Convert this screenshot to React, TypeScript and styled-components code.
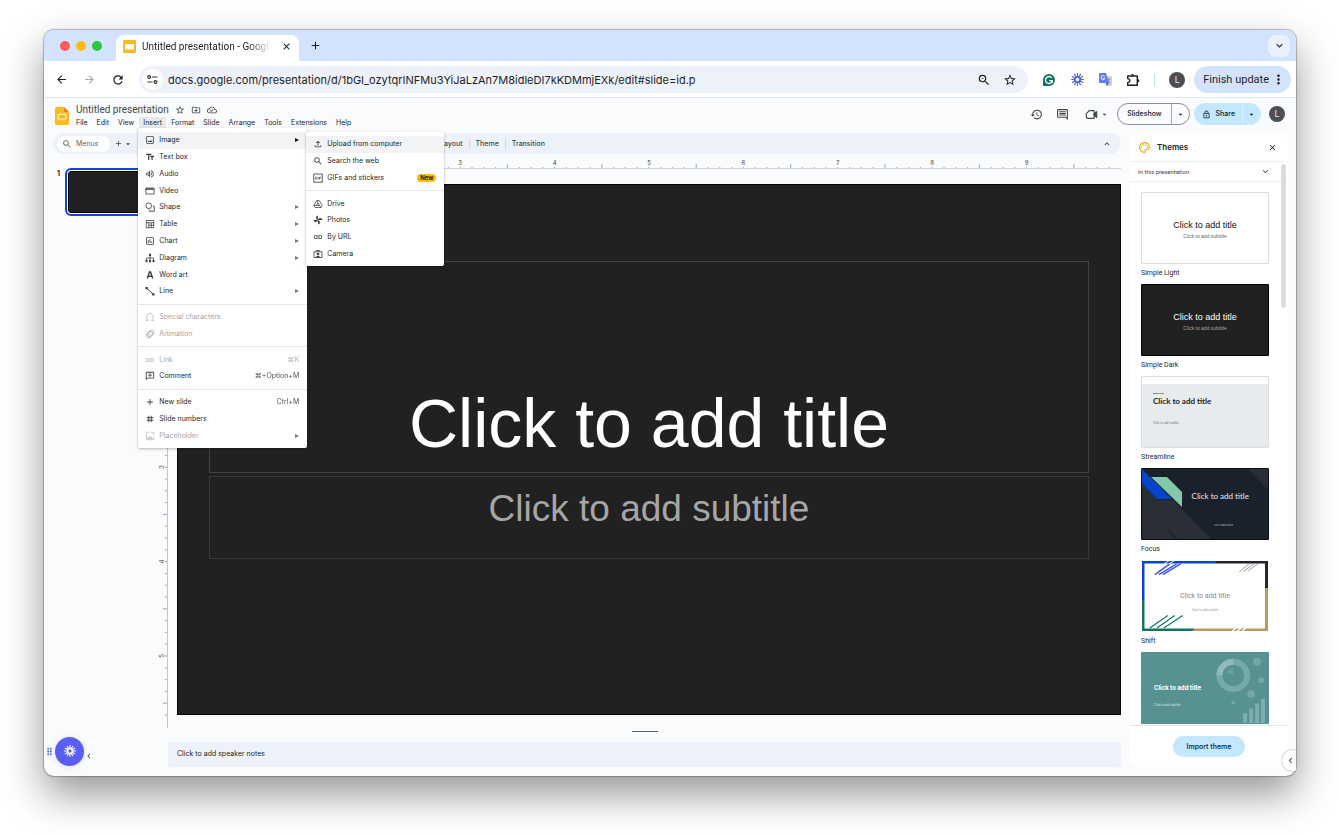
import React from 'react';
import styled, { createGlobalStyle } from 'styled-components';
import {
  MdStarBorder, MdOutlineDriveFileMove, MdOutlineCloudDone, MdOutlineImage, MdTextFields,
  MdOutlineVolumeUp, MdOutlineInsertChart, MdAnimation,
  MdLink, MdOutlineAddComment, MdAdd, MdTag, MdOutlineFileUpload, MdSearch,
  MdHistory, MdOutlineComment, MdOutlineLock, MdOutlinePalette, MdZoomOut,
  MdClose, MdExpandMore, MdExpandLess, MdChevronLeft, MdMoreVert,
  MdArrowBack, MdArrowForward, MdRefresh, MdArrowDropDown, MdUndo, MdRedo, MdOutlinePrint,
  MdOutlineFormatPaint, MdDragIndicator,
} from 'react-icons/md';
import { Omega } from 'lucide-react';

const GlobalStyle = createGlobalStyle`
  * { box-sizing: border-box; }
  body { margin: 0; background: #fff; font-family: Inter, "Liberation Sans", sans-serif; color: #1f1f1f; }
  button, input { font: inherit; color: inherit; border: 0; padding: 0; margin: 0; background: none; }
  a { color: inherit; text-decoration: none; }
  ul { list-style: none; margin: 0; padding: 0; }
  svg { display: block; flex: none; }
  h1, h2, p { margin: 0; font-weight: 400; }
`;

/* ---------- window ---------- */

const Page = styled.div`
  min-height: 100vh;
  display: flex;
  padding: 30px 44px 59px;
`;

const Window = styled.div`
  position: relative;
  flex: 1;
  min-width: 0;
  display: flex;
  flex-direction: column;
  border-radius: 10px;
  background: #f9fbfd;
  box-shadow: 0 0 1px 1px rgba(0, 0, 0, 0.25), 0 18px 40px rgba(0, 0, 0, 0.42);
`;

const TabStrip = styled.div`
  height: 31px;
  display: flex;
  align-items: center;
  padding: 0 6px 0 16px;
  background: #d3e3fd;
  border-radius: 10px 10px 0 0;
`;

const Lights = styled.div`
  display: flex;
  gap: 6px;
  margin-right: 14px;
`;

const Light = styled.span<{ $color: string }>`
  width: 10px;
  height: 10px;
  border-radius: 50%;
  background: ${(p) => p.$color};
`;

const Tab = styled.div`
  align-self: flex-end;
  width: 183px;
  height: 26px;
  padding: 0 7px 3px;
  display: flex;
  align-items: center;
  background: #fff;
  border-radius: 8px 8px 0 0;
`;

const TabTitle = styled.span`
  flex: 1;
  margin: 0 10px 0 6px;
  white-space: nowrap;
  font: 10px/14px Roboto, sans-serif;
  mask-image: linear-gradient(to right, #000 82%, transparent);
`;

const IconButton = styled.button<{ $color?: string }>`
  display: flex;
  align-items: center;
  justify-content: center;
  color: ${(p) => p.$color ?? 'inherit'};
`;

const NewTab = styled(IconButton)`
  margin-left: 10px;
`;

const TabSearch = styled(IconButton)`
  width: 22px;
  height: 22px;
  margin-left: auto;
  border-radius: 8px;
  background: #e9f1fe;
`;

const AddressBar = styled.div`
  height: 37px;
  display: flex;
  align-items: center;
  padding: 1px 5px 0 11px;
  background: #fff;
  border-bottom: 1px solid #dfe5ec;
`;

const NavButtons = styled.div`
  display: flex;
  gap: 15px;
  margin-right: 14px;
`;

const Omnibox = styled.div`
  flex: 1;
  min-width: 0;
  height: 27px;
  display: flex;
  align-items: center;
  gap: 12px;
  padding: 0 11px 0 3px;
  border-radius: 14px;
  background: #edf1fa;
`;

const SiteInfo = styled(IconButton)`
  width: 21px;
  height: 21px;
  border-radius: 50%;
  background: #fff;
`;

const UrlInput = styled.input`
  flex: 1;
  min-width: 0;
  margin-left: -7px;
  font: 11px/16px Inter, sans-serif;
  color: #1f1f1f;
  outline: 0;
`;

const Extensions = styled.div`
  display: flex;
  align-items: center;
  gap: 14px;
  margin-left: 14px;
`;

const ExtensionButton = styled(IconButton)`
  width: 14px;
  height: 14px;
`;

const BarDivider = styled.span`
  width: 1px;
  height: 12px;
  background: #c8dbfb;
`;

const Avatar = styled.button`
  width: 16px;
  height: 16px;
  border-radius: 50%;
  background: #4c5054;
  color: #e8eaed;
  font: 9px/16px Roboto, sans-serif;
`;

const FinishUpdate = styled.button`
  height: 27px;
  display: flex;
  align-items: center;
  gap: 2px;
  margin-left: 9px;
  padding: 0 5px 0 9px;
  border-radius: 14px;
  background: #d3e3fd;
  font: 11px/16px Roboto, sans-serif;
  white-space: nowrap;
`;

/* ---------- document header ---------- */

const DocHeader = styled.header`
  height: 35px;
  display: flex;
  align-items: flex-start;
  padding: 4px 11px 0;
`;

const HomeLink = styled.a`
  margin: 5px 3px 0 0;
`;

const TitleArea = styled.div`
  display: flex;
  flex-direction: column;
`;

const TitleRow = styled.div`
  display: flex;
  align-items: center;
  gap: 6px;
  height: 15px;
  padding-left: 4px;
  color: #444746;
`;

const DocTitle = styled.h1`
  font: 10px/14px Roboto, sans-serif;
`;

const MenuBar = styled.nav`
  display: flex;
  gap: 1px;
`;

const MenuSlot = styled.div`
  position: relative;
  display: flex;
`;

const MenuBarButton = styled.button<{ $active?: boolean }>`
  height: 11px;
  padding: 0 4px;
  border-radius: 2px 2px 0 0;
  background: ${(p) => (p.$active ? '#e6e8ea' : 'transparent')};
  font: 7px/11px Inter, sans-serif;
`;

const HeaderActions = styled.div`
  display: flex;
  align-items: center;
  margin: 1px 0 0 auto;
  color: #444746;
`;

const IconRow = styled.div`
  display: flex;
  align-items: center;
  gap: 13px;
  margin-right: 8px;
`;

const MeetButton = styled(IconButton)`
  gap: 2px;
  padding-left: 3px;
`;

const SplitPill = styled.div<{ $filled?: boolean }>`
  display: flex;
  height: 22px;
  margin-right: ${(p) => (p.$filled ? '8px' : '4px')};
  border-radius: 11px;
  border: 1px solid ${(p) => (p.$filled ? '#c2e7ff' : '#8b8f92')};
  background: ${(p) => (p.$filled ? '#c2e7ff' : 'transparent')};
  color: #001d35;
  font: 500 7px/20px Inter, sans-serif;
`;

const PillMain = styled.button<{ $wide?: boolean }>`
  display: flex;
  align-items: center;
  gap: 5px;
  padding: 0 ${(p) => (p.$wide ? '9px' : '7px')};
`;

const PillArrow = styled.button<{ $filled?: boolean }>`
  width: 18px;
  display: flex;
  align-items: center;
  justify-content: center;
  border-left: 1px solid ${(p) => (p.$filled ? '#d9f0ff' : '#a7aaad')};
`;

/* ---------- menus ---------- */

const MenuPanel = styled.ul<{ $sub?: boolean }>`
  position: absolute;
  z-index: ${(p) => (p.$sub ? 2 : 10)};
  top: ${(p) => (p.$sub ? '0' : '100%')};
  left: ${(p) => (p.$sub ? 'calc(100% - 1px)' : '-1px')};
  width: ${(p) => (p.$sub ? '138px' : '169px')};
  height: ${(p) => (p.$sub ? '134px' : '320px')};
  padding: 4px 0;
  display: flex;
  flex-direction: column;
  background: #fff;
  border-radius: 2px;
  box-shadow: 0 1px 3px rgba(0, 0, 0, 0.28);
`;

const MenuEntry = styled.li<{ $open?: boolean }>`
  position: relative;
  flex: 1;
  display: flex;
  background: ${(p) => (p.$open ? '#f1f3f4' : 'transparent')};
`;

const MenuButton = styled.button<{ $disabled?: boolean }>`
  flex: 1;
  display: flex;
  align-items: center;
  gap: 4px;
  padding: 0 8px 0 7px;
  text-align: left;
  font: 7px/12px Inter, sans-serif;
  color: ${(p) => (p.$disabled ? '#a3a5a8' : '#1f1f1f')};

  & > svg { color: ${(p) => (p.$disabled ? '#b4b6b9' : '#3c3f42')}; }
`;

const MenuLabel = styled.span`
  flex: 1;
  white-space: nowrap;
`;

const Shortcut = styled.span`
  font: 7px/12px Inter, "DejaVu Sans", sans-serif;
  color: inherit;
  opacity: 0.8;
`;

const MenuRule = styled.li`
  height: 1px;
  margin: 4px 0;
  background: #e4e6e9;
`;

const NewBadge = styled.span`
  padding: 0 3px;
  border-radius: 4px;
  background: #fbbc04;
  font: 700 6px/8px Inter, sans-serif;
`;

/* ---------- workspace ---------- */

const Workspace = styled.div`
  flex: 1;
  min-height: 0;
  display: flex;
  gap: 9px;
  padding: 0 8px 9px 0;
`;

const EditorColumn = styled.main`
  flex: 1;
  min-width: 0;
  display: flex;
  flex-direction: column;
`;

const Toolbar = styled.div`
  height: 21px;
  display: flex;
  align-items: center;
  margin-left: 9px;
  padding: 0 9px 0 4px;
  border-radius: 11px;
  background: #edf2fa;
  color: #444746;
  font: 500 7px/12px Inter, sans-serif;
`;

const MenusSearch = styled.button`
  height: 16px;
  width: 53px;
  display: flex;
  align-items: center;
  gap: 4px;
  padding-left: 5px;
  margin-right: 4px;
  border-radius: 8px;
  background: #fff;
  font: 7px/16px Inter, sans-serif;
  color: #5f6368;
`;

const ToolGroup = styled.div`
  flex: 0 0 301px;
  display: flex;
  align-items: center;
  gap: 12px;
  padding-left: 12px;
`;

const ToolButton = styled.button`
  padding: 0 6px;
`;

const ToolDivider = styled.span`
  width: 1px;
  height: 10px;
  background: #d3d7de;
`;

const CollapseButton = styled(IconButton)`
  margin-left: auto;
`;

const EditorBody = styled.div`
  flex: 1;
  min-height: 0;
  display: flex;
`;

const Filmstrip = styled.aside`
  width: 112px;
  flex: none;
  display: flex;
  flex-direction: column;
  padding: 14px 0 0 13px;
`;

const SlideEntry = styled.div`
  display: flex;
  align-items: flex-start;
  gap: 5px;
  font: 700 7px/12px Inter, sans-serif;
`;

const SlideThumb = styled.button`
  width: 85px;
  height: 48px;
  padding: 1px;
  border: 2px solid #1347d6;
  border-radius: 6px;
  background: #fff;
`;

const SlidePreview = styled.span`
  display: block;
  height: 100%;
  border: 1px solid #050505;
  border-radius: 3px;
  background: #212121;
`;

const AssistantRow = styled.div`
  display: flex;
  align-items: center;
  margin: auto 0 1px -13px;
  height: 30px;
  color: #3d5bf0;
`;

const AssistantButton = styled.button`
  width: 29px;
  height: 29px;
  display: flex;
  align-items: center;
  justify-content: center;
  border-radius: 50%;
  background: #5b5ef6;
  color: #fff;
  box-shadow: 0 1px 6px rgba(0, 0, 0, 0.12);
`;

const FilmstripToggle = styled(IconButton)`
  padding-top: 10px;
`;

const CanvasColumn = styled.section`
  flex: 1;
  min-width: 0;
  display: flex;
  flex-direction: column;
`;

const CanvasGrid = styled.div`
  display: grid;
  grid-template-columns: 12px 1fr;
  grid-template-rows: 15px auto;
`;

const RulerTop = styled.div`
  grid-column: 2;
  padding-left: 9px;
  border-bottom: 1px solid #d0d3d6;
`;

const RulerSide = styled.div`
  grid-column: 1;
  padding: 15px 0 13px;
  border-right: 1px solid #c4c7ca;
`;

const RulerSvg = styled.svg`
  width: 100%;
  height: 100%;
  overflow: visible;
  font: 6px Inter, sans-serif;
  fill: #444746;
  stroke: none;
`;

const SlideArea = styled.div`
  padding: 15px 0 13px 9px;
`;

const Slide = styled.div`
  aspect-ratio: 944 / 531;
  display: flex;
  flex-direction: column;
  gap: 3px;
  padding: 76px 31px 0;
  border: 1px solid #050505;
  background: #212121;
  font-family: "Liberation Sans", Arial, sans-serif;
  text-align: center;
`;

const TitlePlaceholder = styled.div`
  height: 212px;
  display: flex;
  align-items: flex-end;
  justify-content: center;
  padding-bottom: 10px;
  border: 1px solid #424242;
  color: #fff;
  font-size: 68px;
  line-height: 78px;
`;

const SubtitlePlaceholder = styled.div`
  height: 83px;
  padding-top: 11px;
  border: 1px solid #383838;
  color: #a6a6a6;
  font-size: 37px;
  line-height: 42px;
`;

const Splitter = styled.div`
  height: 14px;
  display: flex;
  justify-content: center;
  padding: 3px 0 0 12px;
`;

const SplitterHandle = styled.span`
  width: 26px;
  height: 1px;
  background: #5f6368;
`;

const Notes = styled.textarea`
  display: block;
  height: 25px;
  margin: 0 0 0 12px;
  padding: 6px 9px;
  border: 0;
  border-radius: 4px;
  outline: 0;
  resize: none;
  background: #edf2fa;
  font: 7px/12px Inter, sans-serif;
  color: #1f1f1f;
`;

/* ---------- themes ---------- */

const ThemesPanel = styled.aside`
  width: 158px;
  flex: none;
  display: flex;
  flex-direction: column;
  min-height: 0;
  border-radius: 8px;
  background: #fff;
`;

const ThemesHeader = styled.div`
  height: 29px;
  flex: none;
  display: flex;
  align-items: center;
  gap: 6px;
  padding: 0 11px 0 8px;
  border-bottom: 1px solid #eceef0;
`;

const ThemesHeading = styled.h2`
  flex: 1;
  font: 600 8px/12px Inter, sans-serif;
`;

const ThemesBody = styled.div`
  flex: 1;
  min-height: 0;
  display: flex;
  overflow: hidden;
`;

const ThemesScroll = styled.div`
  flex: 1;
  min-width: 0;
`;

const SectionToggle = styled.button`
  width: 100%;
  height: 20px;
  display: flex;
  align-items: center;
  justify-content: space-between;
  padding: 0 10px 0 8px;
  border-bottom: 1px solid #eceef0;
  font: 6px/12px Roboto, sans-serif;
  color: #444746;
`;

const ThemeList = styled.ul`
  height: 0;
  padding: 10px 12px 0 11px;
  display: flex;
  flex-direction: column;
  gap: 5px;
`;

const ThemeItem = styled.li`
  flex: none;
`;

const ThemeCaption = styled.p`
  padding-top: 3px;
  font: 7px/12px Roboto, sans-serif;
`;

const ThemeThumb = styled.button<{ $bg: string; $outline?: string }>`
  position: relative;
  width: 100%;
  height: 72px;
  display: flex;
  flex-direction: column;
  overflow: hidden;
  border: 1px solid ${(p) => p.$outline ?? 'transparent'};
  border-radius: 1px;
  background: ${(p) => p.$bg};
`;

const ThumbArt = styled.svg`
  position: absolute;
  inset: 0;
  width: 100%;
  height: 100%;
`;

const ThumbText = styled.span<{ $align: string; $color: string; $top: number; $font: string; $inset?: number }>`
  position: relative;
  align-self: ${(p) => p.$align};
  margin-top: ${(p) => p.$top}px;
  margin-inline: ${(p) => p.$inset ?? 0}px;
  color: ${(p) => p.$color};
  font: ${(p) => p.$font};
  white-space: nowrap;
`;

const ScrollTrack = styled.div`
  width: 7px;
  padding-top: 2px;
`;

const ScrollThumb = styled.div`
  width: 5px;
  height: 144px;
  border-radius: 3px;
  background: #dadce0;
`;

const ThemesFooter = styled.div`
  height: 42px;
  flex: none;
  display: flex;
  align-items: center;
  justify-content: center;
  border-top: 1px solid #e4e7ea;
`;

const ImportButton = styled.button`
  height: 21px;
  padding: 0 14px;
  border-radius: 11px;
  background: #c2e7ff;
  color: #001d35;
  font: 500 7px/21px Inter, sans-serif;
`;

const SideToggleClip = styled.div`
  position: absolute;
  right: 0;
  bottom: 4px;
  width: 15px;
  height: 23px;
  overflow: hidden;
`;

const SideToggle = styled.button`
  width: 21px;
  height: 21px;
  margin: 1px;
  padding-left: 3px;
  border-radius: 50%;
  background: #fff;
  color: #444746;
  box-shadow: 0 0 2px rgba(0, 0, 0, 0.45);
`;

/* ---------- drawn icons ---------- */

const SlidesFavicon = () => (
  <svg width="13" height="13" viewBox="0 0 13 13">
    <rect width="13" height="13" rx="1" fill="#fbb91b" />
    <rect x="2" y="4" width="9" height="5.500" fill="#fff" />
  </svg>
);

const SlidesLogo = () => (
  <svg width="14" height="18" viewBox="0 0 14 18">
    <path d="M1.500 0H9l5 5v11.500a1.500 1.500 0 0 1-1.500 1.500h-11A1.500 1.500 0 0 1 0 16.500v-15A1.500 1.500 0 0 1 1.500 0z" fill="#fbb91b" />
    <path d="M9 0l5 5H10a1 1 0 0 1-1-1z" fill="#f0801f" />
    <path d="M3 7.500h8v4.500H3z" fill="none" stroke="#fff" strokeWidth="0.900" />
    <path d="M5 6v1M7 6v1M9 6v1M5 12.500v1M7 12.500v1M9 12.500v1" stroke="#ffe9b8" strokeWidth="0.700" />
  </svg>
);

const SiteSettings = () => (
  <svg width="11" height="11" viewBox="0 0 11 11" fill="none" stroke="#333" strokeWidth="1.200">
    <circle cx="2.200" cy="3" r="1.400" />
    <path d="M5 3h5.500M0.500 8h5" />
    <circle cx="8.500" cy="8" r="1.400" />
  </svg>
);

const Sunburst = ({ size, color }: { size: number; color: string }) => (
  <svg width={size} height={size} viewBox="0 0 14 14" fill="none" stroke={color}>
    <circle cx="7" cy="7" r="2.900" strokeWidth="1.900" />
    {Array.from({ length: 12 }, (_, i) => (
      <path key={i} d="M7 0.600v3" strokeWidth="1.300" strokeLinecap="round" transform={`rotate(${i * 30} 7 7)`} />
    ))}
  </svg>
);

const Grammarly = () => (
  <svg width="12" height="12" viewBox="0 0 12 12">
    <path d="M6 0a6 6 0 1 1 0 12H1a1 1 0 0 1-1-1V6a6 6 0 0 1 6-6z" fill="#11705f" />
    <path d="M8.700 3.800A3.500 3.500 0 1 0 9.400 6.700M6.300 6.700h3.100v2" fill="none" stroke="#fff" strokeWidth="1.300" />
  </svg>
);

const Translate = () => (
  <svg width="13" height="13" viewBox="0 0 13 13">
    <path d="M5 3h7a1 1 0 0 1 1 1v8a1 1 0 0 1-1 1H8z" fill="#cfd3d8" />
    <path d="M9 5v1M7.500 6.200h4M10.800 6.200c-.4 1.600-1.500 2.800-2.800 3.500M8.500 7c.6 1.300 1.500 2.200 2.700 2.800" fill="none" stroke="#7c8288" strokeWidth="0.700" />
    <path d="M1 0h6l3 10H1a1 1 0 0 1-1-1V1a1 1 0 0 1 1-1z" fill="#5f7df5" />
    <path d="M10 10l-2.500 3L7 10z" fill="#3457d5" />
    <path d="M5.700 3.500A2 2 0 1 0 6 5.200H4.200" fill="none" stroke="#fff" strokeWidth="0.900" />
  </svg>
);

const Puzzle = () => (
  <svg width="14" height="14" viewBox="0 0 14 14">
    <path d="M1.700 3h9.600v9.300H1.700V9.700a2.050 2.050 0 0 0 0-4.100z" fill="none" stroke="#1f1f1f" strokeWidth="1.400" strokeLinejoin="round" />
    <path d="M4.800 2.600a1.700 1.700 0 0 1 3.400 0zM11.700 5.900a1.700 1.700 0 0 1 0 3.400z" fill="#1f1f1f" />
  </svg>
);

const MeetCamera = () => (
  <svg width="13" height="13" viewBox="0 0 20 20" fill="none" stroke="currentColor" strokeWidth="1.700" strokeLinejoin="round">
    <path d="M6.500 4H14v12H4a2 2 0 0 1-2-2V8.500z" />
    <path d="M14 8.500l4-3v9l-4-3z" fill="currentColor" />
  </svg>
);

const VideoIcon = () => (
  <svg width="10" height="10" viewBox="0 0 20 20" fill="none" stroke="currentColor">
    <path d="M1.800 4h16.400v12H1.800z" strokeWidth="1.600" />
    <path d="M1.500 6h17" strokeWidth="3.600" />
    <path d="M6 4l1 3M11 4l1 3M16 4l1 3" stroke="#fff" strokeWidth="1" />
  </svg>
);

const TableIcon = () => (
  <svg width="10" height="10" viewBox="0 0 20 20" fill="none" stroke="currentColor" strokeWidth="1.600">
    <path d="M2.500 3h15v14.500h-15zM2.500 7.500h15M7.500 7.500v10M12.500 7.500v10M7.500 12.500h10" />
  </svg>
);

const GifIcon = () => (
  <svg width="10" height="10" viewBox="0 0 20 20" fill="none" stroke="currentColor" strokeWidth="1.700">
    <path d="M1.500 2h17v16.500h-17z" />
    <path d="M8 8.500H5v3.500h3v-2M10.500 7.500v5.500M13 13V8.300h3M13 10.500h2.500" strokeWidth="1.300" />
  </svg>
);

const ShapeIcon = () => (
  <svg width="10" height="10" viewBox="0 0 20 20" fill="none" stroke="currentColor" strokeWidth="1.700">
    <circle cx="7.500" cy="7.500" r="5.700" />
    <path d="M15.500 8.500h3v10h-10v-3" />
  </svg>
);

const DiagramIcon = () => (
  <svg width="10" height="10" viewBox="0 0 20 20">
    <path d="M10 4v13M3 16v-6h14v6" fill="none" stroke="currentColor" strokeWidth="1.600" />
    <path d="M8 1.500h4v4.500H8zM1 14h4v4.500H1zM8 14h4v4.500H8zM15 14h4v4.500h-4z" fill="currentColor" />
  </svg>
);

const WordArtIcon = () => (
  <svg width="10" height="10" viewBox="0 0 20 20" fill="none" stroke="currentColor" strokeWidth="2.800">
    <path d="M4.500 17L9 4h2l4.500 13M6.500 12.500h7" />
  </svg>
);

const LineIcon = () => (
  <svg width="10" height="10" viewBox="0 0 20 20">
    <path d="M3 4l14 13" stroke="currentColor" strokeWidth="2" />
    <path d="M1 2h4.500v4.500H1zM14.500 14.500H19V19h-4.500z" fill="currentColor" />
  </svg>
);

const PlaceholderIcon = () => (
  <svg width="10" height="10" viewBox="0 0 20 20" fill="none" stroke="currentColor" strokeWidth="1.500">
    <path d="M8 2.500H3.500a1 1 0 0 0-1 1v13a1 1 0 0 0 1 1h13a1 1 0 0 0 1-1V12M11 2.500h6.500V9M5 15l3-4 2.500 3 2-2.500L15 15z" />
  </svg>
);

const DriveIcon = () => (
  <svg width="10" height="10" viewBox="0 0 20 20" fill="none" stroke="currentColor" strokeWidth="1.500" strokeLinejoin="round">
    <path d="M7.500 3h5l5.700 9.500-2.300 4.500H4.100l-2.300-4.500z" />
    <path d="M10 8l3 5H7zM7.500 3L10 8M1.800 12.500L7 13M15.900 17L13 13" />
  </svg>
);

const PhotosIcon = () => (
  <svg width="10" height="10" viewBox="0 0 20 20" fill="currentColor">
    <path d="M9.800 1a4.700 4.700 0 0 0 0 9.200zM19 9.800a4.700 4.700 0 0 0-9.200 0zM10.200 19a4.700 4.700 0 0 0 0-9.200zM1 10.200a4.700 4.700 0 0 0 9.200 0z" />
  </svg>
);

const CameraIcon = () => (
  <svg width="10" height="10" viewBox="0 0 20 20">
    <path d="M2 5.500h16v11.500H2zM7 5V3h6v2" fill="none" stroke="currentColor" strokeWidth="1.700" />
    <circle cx="10" cy="10" r="2.700" fill="currentColor" />
    <path d="M6 16.500a4 3 0 0 1 8 0z" fill="currentColor" />
  </svg>
);

const FlippedComment = styled(MdOutlineAddComment)`
  transform: scaleX(-1);
`;

const Triangle = ({ dark }: { dark?: boolean }) => (
  <svg width="4" height="4" viewBox="0 0 4 4">
    <path d="M0 0l4 2-4 2z" fill={dark ? '#111' : '#777'} />
  </svg>
);

/* ---------- data ---------- */

type Entry = {
  label: string;
  icon: React.ReactNode;
  keys?: string;
  disabled?: boolean;
  arrow?: boolean;
  badge?: string;
  children?: (Entry | null)[];
};

const imageEntries: (Entry | null)[] = [
  { label: 'Upload from computer', icon: <MdOutlineFileUpload size={10} /> },
  { label: 'Search the web', icon: <MdSearch size={10} /> },
  { label: 'GIFs and stickers', icon: <GifIcon />, badge: 'New' },
  null,
  { label: 'Drive', icon: <DriveIcon /> },
  { label: 'Photos', icon: <PhotosIcon /> },
  { label: 'By URL', icon: <MdLink size={10} /> },
  { label: 'Camera', icon: <CameraIcon /> },
];

const insertEntries: (Entry | null)[] = [
  { label: 'Image', icon: <MdOutlineImage size={10} />, arrow: true, children: imageEntries },
  { label: 'Text box', icon: <MdTextFields size={10} /> },
  { label: 'Audio', icon: <MdOutlineVolumeUp size={10} /> },
  { label: 'Video', icon: <VideoIcon /> },
  { label: 'Shape', icon: <ShapeIcon />, arrow: true },
  { label: 'Table', icon: <TableIcon />, arrow: true },
  { label: 'Chart', icon: <MdOutlineInsertChart size={10} />, arrow: true },
  { label: 'Diagram', icon: <DiagramIcon />, arrow: true },
  { label: 'Word art', icon: <WordArtIcon /> },
  { label: 'Line', icon: <LineIcon />, arrow: true },
  null,
  { label: 'Special characters', icon: <Omega size={10} />, disabled: true },
  { label: 'Animation', icon: <MdAnimation size={10} />, disabled: true },
  null,
  { label: 'Link', icon: <MdLink size={10} />, keys: '⌘K', disabled: true },
  { label: 'Comment', icon: <FlippedComment size={10} />, keys: '⌘+Option+M' },
  null,
  { label: 'New slide', icon: <MdAdd size={10} />, keys: 'Ctrl+M' },
  { label: 'Slide numbers', icon: <MdTag size={10} /> },
  { label: 'Placeholder', icon: <PlaceholderIcon />, disabled: true, arrow: true },
];

const Menu = ({ entries, sub }: { entries: (Entry | null)[]; sub?: boolean }) => (
  <MenuPanel $sub={sub}>
    {entries.map((e, i) =>
      e === null ? (
        <MenuRule key={i} />
      ) : (
        <MenuEntry key={i} $open={i === 0}>
          <MenuButton $disabled={e.disabled}>
            {e.icon}
            <MenuLabel>{e.label}</MenuLabel>
            {e.keys && <Shortcut>{e.keys}</Shortcut>}
            {e.badge && <NewBadge>{e.badge}</NewBadge>}
            {e.arrow && <Triangle dark={!!e.children} />}
          </MenuButton>
          {e.children && <Menu entries={e.children} sub />}
        </MenuEntry>
      ),
    )}
  </MenuPanel>
);

const HorizontalRuler = () => (
  <RulerSvg>
    {Array.from({ length: 80 }, (_, i) => {
      const x = `${i * 1.25}%`;
      const half = i % 8 === 4;
      return <line key={i} x1={x} x2={x} y1={half ? 10 : 13} y2="14" stroke="#a3a6a9" />;
    })}
    {[3, 4, 5, 6, 7, 8, 9].map((n) => (
      <text key={n} x={`${n * 10}%`} y="11" textAnchor="middle">{n}</text>
    ))}
  </RulerSvg>
);

const VerticalRuler = () => (
  <RulerSvg>
    {Array.from({ length: 46 }, (_, i) => {
      const y = `${(i * 100) / 45}%`;
      const half = i % 8 === 4;
      return <line key={i} y1={y} y2={y} x1={half ? 7 : 9} x2="11" stroke="#a3a6a9" />;
    })}
    {[3, 4, 5].map((n) => (
      <svg key={n} x="8" y={`${(n * 800) / 45}%`} overflow="visible">
        <text transform="rotate(-90)" textAnchor="middle">{n}</text>
      </svg>
    ))}
  </RulerSvg>
);

const T = 'Click to add title';
const S = 'Click to add subtitle';

const Themes = () => (
  <ThemeList>
    <ThemeItem>
      <ThemeThumb $bg="#fff" $outline="#dadce0">
        <ThumbText $align="center" $color="#111" $top={26} $font='9px/12px "Liberation Sans", sans-serif'>{T}</ThumbText>
        <ThumbText $align="center" $color="#666" $top={2} $font='5px/6px "Liberation Sans", sans-serif'>{S}</ThumbText>
      </ThemeThumb>
      <ThemeCaption>Simple Light</ThemeCaption>
    </ThemeItem>
    <ThemeItem>
      <ThemeThumb $bg="#212121" $outline="#050505">
        <ThumbText $align="center" $color="#fff" $top={26} $font='9px/12px "Liberation Sans", sans-serif'>{T}</ThumbText>
        <ThumbText $align="center" $color="#a6a6a6" $top={2} $font='5px/6px "Liberation Sans", sans-serif'>{S}</ThumbText>
      </ThemeThumb>
      <ThemeCaption>Simple Dark</ThemeCaption>
    </ThemeItem>
    <ThemeItem>
      <ThemeThumb $bg="#e8ebee" $outline="#dadce0">
        <ThumbArt viewBox="0 0 126 70" preserveAspectRatio="none">
          <rect width="126" height="7" fill="#fff" />
          <rect x="11" y="16" width="5" height="1" fill="#4fa3a5" />
          <rect x="16" y="16" width="6" height="1" fill="#c58b52" />
        </ThumbArt>
        <ThumbText $align="flex-start" $inset={11} $color="#222" $top={18} $font="700 8px/12px Lato, sans-serif">{T}</ThumbText>
        <ThumbText $align="flex-start" $inset={11} $color="#777" $top={14} $font="3px/4px Lato, sans-serif">{S}</ThumbText>
      </ThemeThumb>
      <ThemeCaption>Streamline</ThemeCaption>
    </ThemeItem>
    <ThemeItem>
      <ThemeThumb $bg="#1b212c" $outline="#0d1017">
        <ThumbArt viewBox="0 0 126 70" preserveAspectRatio="none">
          <path d="M0 30L33 70H0z" fill="#2b2e35" />
          <path d="M0 15l15 16h16l38 39H36L0 35z" fill="#2a2e36" />
          <path d="M106 0h20v21z" fill="#272c36" />
          <path d="M0 0l30 30H15L0 15z" fill="#0644c9" />
          <path d="M9 8h16l15 15v15z" fill="#83c9a9" />
        </ThumbArt>
        <ThumbText $align="flex-end" $inset={19} $color="#e8eaed" $top={21} $font="8px/12px Lato, sans-serif">{T}</ThumbText>
        <ThumbText $align="flex-end" $inset={35} $color="#bbb" $top={21} $font="2px/4px Inter, sans-serif">{S}</ThumbText>
      </ThemeThumb>
      <ThemeCaption>Focus</ThemeCaption>
    </ThemeItem>
    <ThemeItem>
      <ThemeThumb $bg="#fff">
        <ThumbArt viewBox="0 0 127 72" preserveAspectRatio="none">
          <path d="M0 0h73l2 2.500H2.500V40H0z" fill="#0a45d1" />
          <path d="M73 0h54v28h-3V2.500H75z" fill="#20252d" />
          <path d="M127 28v44H51l2-2.700h71V28z" fill="#b9985a" />
          <path d="M0 40h2.500v29.300H53L51 72H0z" fill="#12745f" />
          <path d="M13 14L28 3M17 14L35 3M21 14L39 3" stroke="#4259e8" strokeWidth="1.500" />
          <path d="M22 3l5-3M27 3l5-3" stroke="#fff" />
          <path d="M98 11l11-9M102 11l12-9M107 10l11-8" stroke="#666b72" strokeWidth="0.700" />
          <path d="M8 69l18-13M15 69l18-13M22 69l19-13" stroke="#12745f" strokeWidth="1.200" />
          <path d="M91 72l4-3M96 72l4-3M101 72l4-3" stroke="#fff" strokeWidth="1.300" />
        </ThumbArt>
        <ThumbText $align="center" $color="#85888c" $top={29} $font="7px/12px Roboto, sans-serif">{T}</ThumbText>
        <ThumbText $align="center" $color="#999" $top={6} $font="3px/4px Roboto, sans-serif">{S}</ThumbText>
      </ThemeThumb>
      <ThemeCaption>Shift</ThemeCaption>
    </ThemeItem>
    <ThemeItem>
      <ThemeThumb $bg="#589290">
        <ThumbArt viewBox="0 0 127 72" preserveAspectRatio="none">
          <circle cx="92" cy="23" r="14" fill="none" stroke="#78a9a9" strokeWidth="6" />
          <path d="M92 9A14 14 0 0 0 78 23" fill="none" stroke="#8fbac0" strokeWidth="6" />
          <path d="M92 23V14l-8 6z" fill="#6b9f9e" />
          <circle cx="116" cy="9" r="4" fill="#74a6a5" />
          <circle cx="120" cy="28" r="3" fill="#74a6a5" />
          <circle cx="110" cy="42" r="4" fill="#74a6a5" />
          <circle cx="92" cy="51" r="2" fill="#74a6a5" />
          <path d="M102 62h4v10h-4zM108 57h4v15h-4zM114 52h4v20h-4zM120 47h4v25h-4z" fill="#7caeb0" />
        </ThumbArt>
        <ThumbText $align="flex-start" $inset={12} $color="#fff" $top={29} $font="700 6px/12px Inter, sans-serif">{T}</ThumbText>
        <ThumbText $align="flex-start" $inset={12} $color="#d5e5e4" $top={9} $font="3px/4px Roboto, sans-serif">{S}</ThumbText>
      </ThemeThumb>
    </ThemeItem>
  </ThemeList>
);

/* ---------- app ---------- */

const menusBefore = ['File', 'Edit', 'View'];
const menusAfter = ['Format', 'Slide', 'Arrange', 'Tools', 'Extensions', 'Help'];

export default function App() {
  return (
    <Page>
      <GlobalStyle />
      <Window>
        <TabStrip>
          <Lights>
            <Light $color="#fc5d57" />
            <Light $color="#fdbb14" />
            <Light $color="#27c93f" />
          </Lights>
          <Tab>
            <SlidesFavicon />
            <TabTitle>Untitled presentation - Googl</TabTitle>
            <IconButton aria-label="Close tab"><MdClose size={11} /></IconButton>
          </Tab>
          <NewTab aria-label="New tab"><MdAdd size={13} /></NewTab>
          <TabSearch aria-label="Search tabs"><MdExpandMore size={13} /></TabSearch>
        </TabStrip>

        <AddressBar>
          <NavButtons>
            <IconButton aria-label="Back"><MdArrowBack size={13} /></IconButton>
            <IconButton aria-label="Forward" $color="#a5a7aa"><MdArrowForward size={13} /></IconButton>
            <IconButton aria-label="Reload"><MdRefresh size={14} /></IconButton>
          </NavButtons>
          <Omnibox>
            <SiteInfo aria-label="Site information"><SiteSettings /></SiteInfo>
            <UrlInput
              aria-label="Address"
              defaultValue="docs.google.com/presentation/d/1bGI_ozytqrINFMu3YiJaLzAn7M8idleDI7kKDMmjEXk/edit#slide=id.p"
            />
            <IconButton aria-label="Zoom"><MdZoomOut size={14} /></IconButton>
            <IconButton aria-label="Bookmark"><MdStarBorder size={14} /></IconButton>
          </Omnibox>
          <Extensions>
            <ExtensionButton aria-label="Grammarly"><Grammarly /></ExtensionButton>
            <ExtensionButton aria-label="Assistant"><Sunburst size={13} color="#4f63f0" /></ExtensionButton>
            <ExtensionButton aria-label="Translate"><Translate /></ExtensionButton>
            <ExtensionButton aria-label="Extensions"><Puzzle /></ExtensionButton>
            <BarDivider />
            <Avatar>L</Avatar>
          </Extensions>
          <FinishUpdate>Finish update<MdMoreVert size={15} /></FinishUpdate>
        </AddressBar>

        <DocHeader>
          <HomeLink href="#" aria-label="Slides home"><SlidesLogo /></HomeLink>
          <TitleArea>
            <TitleRow>
              <DocTitle>Untitled presentation</DocTitle>
              <IconButton aria-label="Star"><MdStarBorder size={10} /></IconButton>
              <IconButton aria-label="Move"><MdOutlineDriveFileMove size={10} /></IconButton>
              <IconButton aria-label="Saved"><MdOutlineCloudDone size={10} /></IconButton>
            </TitleRow>
            <MenuBar>
              {menusBefore.map((m) => <MenuBarButton key={m}>{m}</MenuBarButton>)}
              <MenuSlot>
                <MenuBarButton $active>Insert</MenuBarButton>
                <Menu entries={insertEntries} />
              </MenuSlot>
              {menusAfter.map((m) => <MenuBarButton key={m}>{m}</MenuBarButton>)}
            </MenuBar>
          </TitleArea>
          <HeaderActions>
            <IconRow>
              <IconButton aria-label="Version history"><MdHistory size={13} /></IconButton>
              <IconButton aria-label="Comments"><MdOutlineComment size={13} /></IconButton>
              <MeetButton aria-label="Call"><MeetCamera /><MdArrowDropDown size={9} /></MeetButton>
            </IconRow>
            <SplitPill>
              <PillMain $wide>Slideshow</PillMain>
              <PillArrow aria-label="Slideshow options"><MdArrowDropDown size={9} /></PillArrow>
            </SplitPill>
            <SplitPill $filled>
              <PillMain><MdOutlineLock size={9} />Share</PillMain>
              <PillArrow $filled aria-label="Share options"><MdArrowDropDown size={9} /></PillArrow>
            </SplitPill>
            <Avatar>L</Avatar>
          </HeaderActions>
        </DocHeader>

        <Workspace>
          <EditorColumn>
            <Toolbar>
              <MenusSearch><MdSearch size={10} />Menus</MenusSearch>
              <IconButton aria-label="New slide"><MdAdd size={9} /></IconButton>
              <IconButton aria-label="New slide with layout"><MdArrowDropDown size={10} /></IconButton>
              <ToolGroup>
                <MdUndo size={9} />
                <MdRedo size={9} />
                <MdOutlinePrint size={9} />
                <MdOutlineFormatPaint size={9} />
              </ToolGroup>
              <ToolButton>Layout</ToolButton>
              <ToolDivider />
              <ToolButton>Theme</ToolButton>
              <ToolDivider />
              <ToolButton>Transition</ToolButton>
              <CollapseButton aria-label="Hide the menus"><MdExpandLess size={10} /></CollapseButton>
            </Toolbar>
            <EditorBody>
              <Filmstrip>
                <SlideEntry>
                  1
                  <SlideThumb aria-label="Slide 1"><SlidePreview /></SlideThumb>
                </SlideEntry>
                <AssistantRow>
                  <MdDragIndicator size={11} />
                  <AssistantButton aria-label="Assistant"><Sunburst size={12} color="#fff" /></AssistantButton>
                  <FilmstripToggle aria-label="Hide filmstrip" $color="#444746"><MdChevronLeft size={10} /></FilmstripToggle>
                </AssistantRow>
              </Filmstrip>
              <CanvasColumn>
                <CanvasGrid>
                  <RulerTop><HorizontalRuler /></RulerTop>
                  <RulerSide><VerticalRuler /></RulerSide>
                  <SlideArea>
                    <Slide>
                      <TitlePlaceholder>{T}</TitlePlaceholder>
                      <SubtitlePlaceholder>{S}</SubtitlePlaceholder>
                    </Slide>
                  </SlideArea>
                </CanvasGrid>
                <Splitter><SplitterHandle /></Splitter>
                <Notes aria-label="Speaker notes" defaultValue="Click to add speaker notes" />
              </CanvasColumn>
            </EditorBody>
          </EditorColumn>

          <ThemesPanel>
            <ThemesHeader>
              <MdOutlinePalette size={13} color="#f5a50b" />
              <ThemesHeading>Themes</ThemesHeading>
              <IconButton aria-label="Close themes"><MdClose size={9} /></IconButton>
            </ThemesHeader>
            <ThemesBody>
              <ThemesScroll>
                <SectionToggle>In this presentation<MdExpandMore size={11} /></SectionToggle>
                <Themes />
              </ThemesScroll>
              <ScrollTrack><ScrollThumb /></ScrollTrack>
            </ThemesBody>
            <ThemesFooter><ImportButton>Import theme</ImportButton></ThemesFooter>
          </ThemesPanel>
        </Workspace>
        <SideToggleClip>
          <SideToggle aria-label="Show side panel"><MdChevronLeft size={11} /></SideToggle>
        </SideToggleClip>
      </Window>
    </Page>
  );
}
